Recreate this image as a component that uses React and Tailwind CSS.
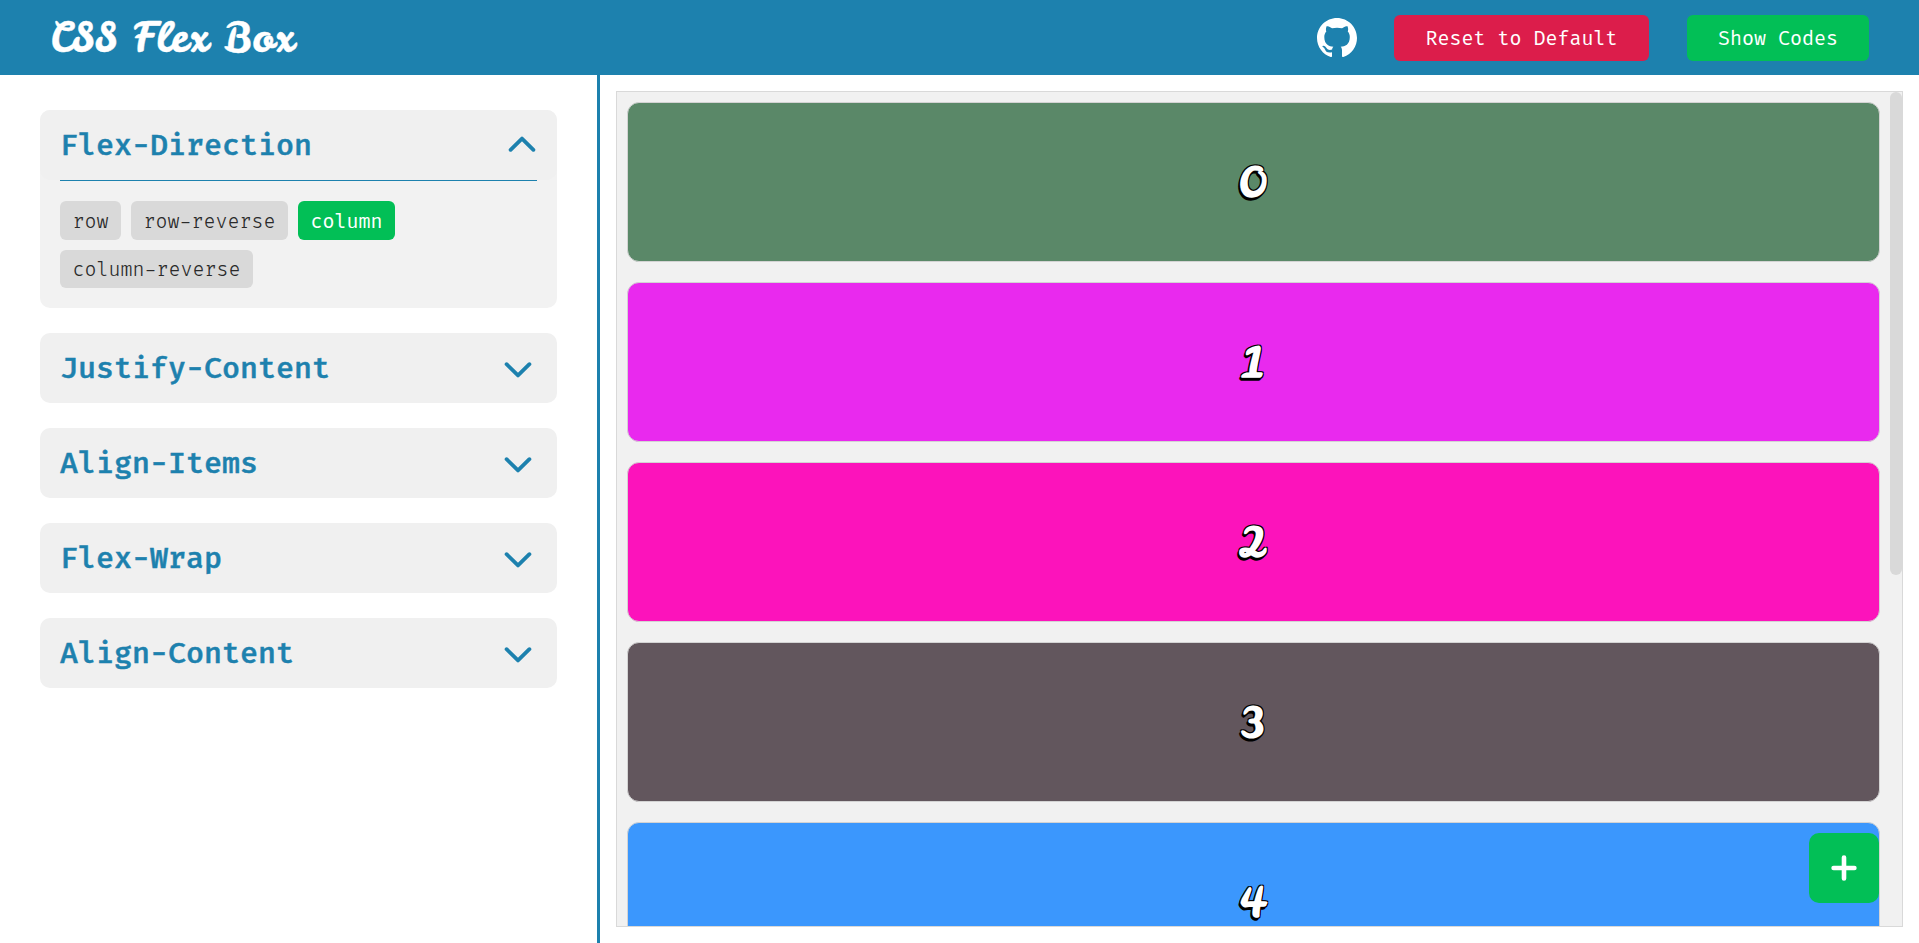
const MONO = "font-['Fira_Mono','Fira_Code','Liberation_Mono',monospace]";

const SECTIONS = ["Justify-Content", "Align-Items", "Flex-Wrap", "Align-Content"];

const DIRECTIONS = ["row", "row-reverse", "column", "column-reverse"];

const BOXES = [
  "bg-[#5a8868]",
  "bg-[#e929ee]",
  "bg-[#fc13bb]",
  "bg-[#62565d]",
  "bg-[#3b97fd]",
];

function GithubIcon() {
  return (
    <svg viewBox="0 0 16 16" className="mr-[-1px] h-10 w-10 shrink-0 fill-white">
      <path d="M8 0C3.58 0 0 3.58 0 8c0 3.54 2.29 6.53 5.47 7.59.4.07.55-.17.55-.38 0-.19-.01-.82-.01-1.49-2.01.37-2.53-.49-2.69-.94-.09-.23-.48-.94-.82-1.13-.28-.15-.68-.52-.01-.53.63-.01 1.08.58 1.23.82.72 1.21 1.87.87 2.33.66.07-.52.28-.87.51-1.07-1.78-.2-3.64-.89-3.64-3.95 0-.87.31-1.59.82-2.15-.08-.2-.36-1.02.08-2.12 0 0 .67-.21 2.2.82.64-.18 1.32-.27 2-.27s1.36.09 2 .27c1.53-1.04 2.2-.82 2.2-.82.44 1.1.16 1.92.08 2.12.51.56.82 1.27.82 2.15 0 3.07-1.87 3.75-3.65 3.95.29.25.54.73.54 1.48 0 1.07-.01 1.93-.01 2.2 0 .21.15.46.55.38A8.01 8.01 0 0 0 16 8c0-4.42-3.58-8-8-8z" />
    </svg>
  );
}

function Chevron({ up }) {
  return (
    <svg
      viewBox="0 0 28 16"
      className={up ? "mr-px h-4 w-7 rotate-180 -mt-0.5" : "mr-[5px] mt-[3px] h-4 w-7"}
      fill="none"
      stroke="#1d81ae"
      strokeWidth="3.8"
      strokeLinecap="round"
      strokeLinejoin="round"
    >
      <path d="M2.6 2.2 14 13.4 25.4 2.2" />
    </svg>
  );
}

function SectionHeader({ title, open }) {
  return (
    <button className="flex h-[70px] w-full items-center justify-between rounded-[10px] bg-[#f0f0f0] px-5">
      <span className="text-[30px] font-medium leading-[38px] text-[#1d81ae] [-webkit-text-stroke:0.5px_#1d81ae]">{title}</span>
      <Chevron up={open} />
    </button>
  );
}

export default function App() {
  return (
    <div className={`flex h-[943px] w-full flex-col overflow-hidden bg-white ${MONO}`}>
      <header className="flex h-[75px] shrink-0 items-center justify-between bg-[#1d81ae] pl-[50px] pr-[50px] text-white">
        <h1 className="whitespace-nowrap pt-px font-['Leckerli_One','Lobster',cursive] text-[40px] leading-[60px] [-webkit-text-stroke:0.4px_white]">
          CSS Flex Box
        </h1>
        <div className="flex items-center gap-[38px] text-xl leading-[26px]">
          <GithubIcon />
          <button className="h-[46px] w-[255px] rounded-md bg-[#dc1d4b]">Reset to Default</button>
          <button className="h-[46px] w-[182px] rounded-md bg-[#02bf56]">Show Codes</button>
        </div>
      </header>

      <div className="flex min-h-0 flex-1">
        <aside className="flex w-[600px] shrink-0 flex-col gap-[25px] border-r-[3px] border-[#1d81ae] pb-10 pl-10 pr-10 pt-[35px]">
          <section className="h-[198px] rounded-[10px] bg-[#f2f2f2]">
            <SectionHeader title="Flex-Direction" open />
            <div className="mx-5 flex flex-wrap gap-2.5 border-t border-[#1d81ae] pt-5">
              {DIRECTIONS.map((d) => (
                <button
                  key={d}
                  className={`h-[38.5px] rounded-md px-[12.5px] leading-[26px] ${
                    d === "column"
                      ? "bg-[#02bf56] pt-0.5 text-xl text-white"
                      : "bg-[#d9d9d9] pt-[3px] font-['Fira_Code','Fira_Mono',monospace] text-[19.5px] font-light text-[#2a2a2a]"
                  }`}
                >
                  {d}
                </button>
              ))}
            </div>
          </section>
          {SECTIONS.map((s) => (
            <SectionHeader key={s} title={s} />
          ))}
        </aside>

        <main className="relative min-w-0 flex-1 p-4">
          <div className="flex h-full overflow-hidden border border-[#d9d9d9] bg-[#f1f1f1]">
            <div className="flex min-w-0 flex-1 flex-col gap-5 p-2.5">
              {BOXES.map((color, i) => (
                <div
                  key={color}
                  className={`flex h-40 shrink-0 items-center justify-center rounded-xl border border-[#d3d3d3] pt-px font-['Leckerli_One','Lobster',cursive] text-[40px] font-bold leading-none text-white [text-shadow:-1px_-1px_0_#000,1px_-1px_0_#000,1px_1px_0_#000,-1px_1px_0_#000,-2px_2px_0_#000,-1px_3px_0_#000] ${color}`}
                >
                  {i}
                </div>
              ))}
            </div>
            <div className="w-3 shrink-0">
              <div className="h-[483px] rounded-full bg-[#d9d9d9]" />
            </div>
          </div>
          <button className="absolute bottom-10 right-10 flex h-[70px] w-[70px] items-center justify-center rounded-[10px] bg-[#02bf56]">
            <svg viewBox="0 0 26 26" className="h-[26px] w-[26px]" stroke="white" strokeWidth="4.6" strokeLinecap="round">
              <path d="M13 2.6v20.8M2.6 13h20.8" />
            </svg>
          </button>
        </main>
      </div>
    </div>
  );
}
